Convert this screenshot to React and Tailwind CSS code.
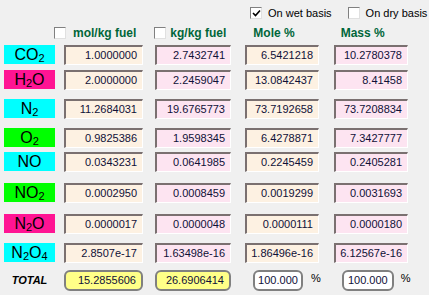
import React from "react";

const rows = [
  { label: <>CO<sub className="text-[11px]">2</sub></>, bg: "bg-[#00ffff]", mt: "mt-[0px]", v: ["1.0000000", "2.7432741", "6.5421218", "10.2780378"] },
  { label: <>H<sub className="text-[11px]">2</sub>O</>, bg: "bg-[#ff1493]", mt: "mt-[5px]", v: ["2.0000000", "2.2459047", "13.0842437", "8.41458"] },
  { label: <>N<sub className="text-[11px]">2</sub></>, bg: "bg-[#00ffff]", mt: "mt-[9px]", v: ["11.2684031", "19.6765773", "73.7192658", "73.7208834"] },
  { label: <>O<sub className="text-[11px]">2</sub></>, bg: "bg-[#00ff00]", mt: "mt-[9px]", v: ["0.9825386", "1.9598345", "6.4278871", "7.3427777"] },
  { label: <>NO</>, bg: "bg-[#00ffff]", mt: "mt-[4px]", v: ["0.0343231", "0.0641985", "0.2245459", "0.2405281"] },
  { label: <>NO<sub className="text-[11px]">2</sub></>, bg: "bg-[#00ff00]", mt: "mt-[11px]", v: ["0.0002950", "0.0008459", "0.0019299", "0.0031693"] },
  { label: <>N<sub className="text-[11px]">2</sub>O</>, bg: "bg-[#ff1493]", mt: "mt-[11px]", v: ["0.0000017", "0.0000048", "0.0000111", "0.0000180"] },
  { label: <>N<sub className="text-[11px]">2</sub>O<sub className="text-[11px]">4</sub></>, bg: "bg-[#00ffff]", mt: "mt-[9px]", v: ["2.8507e-17", "1.63498e-16", "1.86496e-16", "6.12567e-16"] },
];

const widths = ["w-[79px]", "w-[76px]", "w-[74px]", "w-[74px]"];
const bgs = ["bg-[#fdf1e2]", "bg-[#fde4f1]", "bg-[#fdf1e2]", "bg-[#fde4f1]"];

function Box({ w, bg, children }) {
  return (
    <div
      className={`${w} ${bg} h-[20px] flex items-center justify-end pr-[5px] border-t-2 border-l-2 border-r border-b border-t-[#7a7070] border-l-[#7a7070] border-r-white border-b-white text-[11px] text-[#101038]`}
    >
      {children}
    </div>
  );
}

function CheckBox({ checked }) {
  return (
    <div className="w-[12px] h-[12px] bg-white border border-t-[#808080] border-l-[#808080] border-r-[#e0e0e0] border-b-[#e0e0e0] flex items-center justify-center">
      {checked && (
        <svg width="9" height="9" viewBox="0 0 9 9">
          <path d="M1 4 L3.5 6.5 L8 1.5" stroke="#000" strokeWidth="1.6" fill="none" />
        </svg>
      )}
    </div>
  );
}

export default function App() {
  return (
    <div
      className="w-[429px] h-[295px] bg-[#f0f0f0] relative overflow-hidden"
      style={{ fontFamily: '"Liberation Sans", Arial, sans-serif' }}
    >
      <div className="flex items-center pt-[5px] h-[16px] box-content">
        <div className="ml-[250px] flex items-center gap-[6px]">
          <CheckBox checked />
          <span className="text-[11px] text-black leading-none">On wet basis</span>
        </div>
        <div className="ml-[16px] flex items-center gap-[6px]">
          <CheckBox />
          <span className="text-[11px] text-black leading-none">On dry basis</span>
        </div>
      </div>

      <div className="flex items-center mt-[6px] h-[12px] text-[12px] font-bold text-[#00663a] leading-none">
        <div className="ml-[54px] flex items-center gap-[7px]">
          <CheckBox />
          <span>mol/kg fuel</span>
        </div>
        <div className="ml-[18px] flex items-center gap-[4px]">
          <CheckBox />
          <span>kg/kg fuel</span>
        </div>
        <span className="ml-[27px]">Mole %</span>
        <span className="ml-[46px]">Mass %</span>
      </div>

      <div className="flex flex-col mt-[6px]">
        {rows.map((r, i) => (
          <div key={i} className={`flex items-start ${r.mt}`}>
            <div
              className={`ml-[4px] w-[51px] h-[19px] ${r.bg} flex items-center justify-center text-[16px] leading-none text-black`}
            >
              <span>{r.label}</span>
            </div>
            <div className="ml-[9px] flex gap-[12px]">
              <Box w={widths[0]} bg={bgs[0]}>{r.v[0]}</Box>
              <div className="flex">
                <Box w={widths[1]} bg={bgs[1]}>{r.v[1]}</Box>
                <div className="w-[14px]" />
                <Box w={widths[2]} bg={bgs[2]}>{r.v[2]}</Box>
                <div className="w-[15px]" />
                <Box w={widths[3]} bg={bgs[3]}>{r.v[3]}</Box>
              </div>
            </div>
          </div>
        ))}

        <div className="flex items-center mt-[7px]">
          <div className="ml-[4px] w-[51px] flex justify-center">
            <span className="text-[11px] font-bold italic text-black">TOTAL</span>
          </div>
          <div className="ml-[9px] w-[79px] h-[21px] rounded-[6px] border-2 border-[#808080] bg-[#ffff88] flex items-center justify-end pr-[5px] text-[11px] text-[#101038]">
            15.2855606
          </div>
          <div className="ml-[12px] w-[76px] h-[21px] rounded-[6px] border-2 border-[#808080] bg-[#ffff88] flex items-center justify-end pr-[5px] text-[11px] text-[#101038]">
            26.6906414
          </div>
          <div className="ml-[22px] w-[50px] h-[21px] rounded-[6px] border-2 border-[#808080] bg-white flex items-center justify-center text-[11px] text-[#101038]">
            100.000
          </div>
          <span className="ml-[8px] text-[11px] text-black -mt-[4px]">%</span>
          <div className="ml-[21px] w-[52px] h-[21px] rounded-[6px] border-2 border-[#808080] bg-white flex items-center justify-center text-[11px] text-[#101038]">
            100.000
          </div>
          <span className="ml-[7px] text-[11px] text-black -mt-[4px]">%</span>
        </div>
      </div>
    </div>
  );
}
